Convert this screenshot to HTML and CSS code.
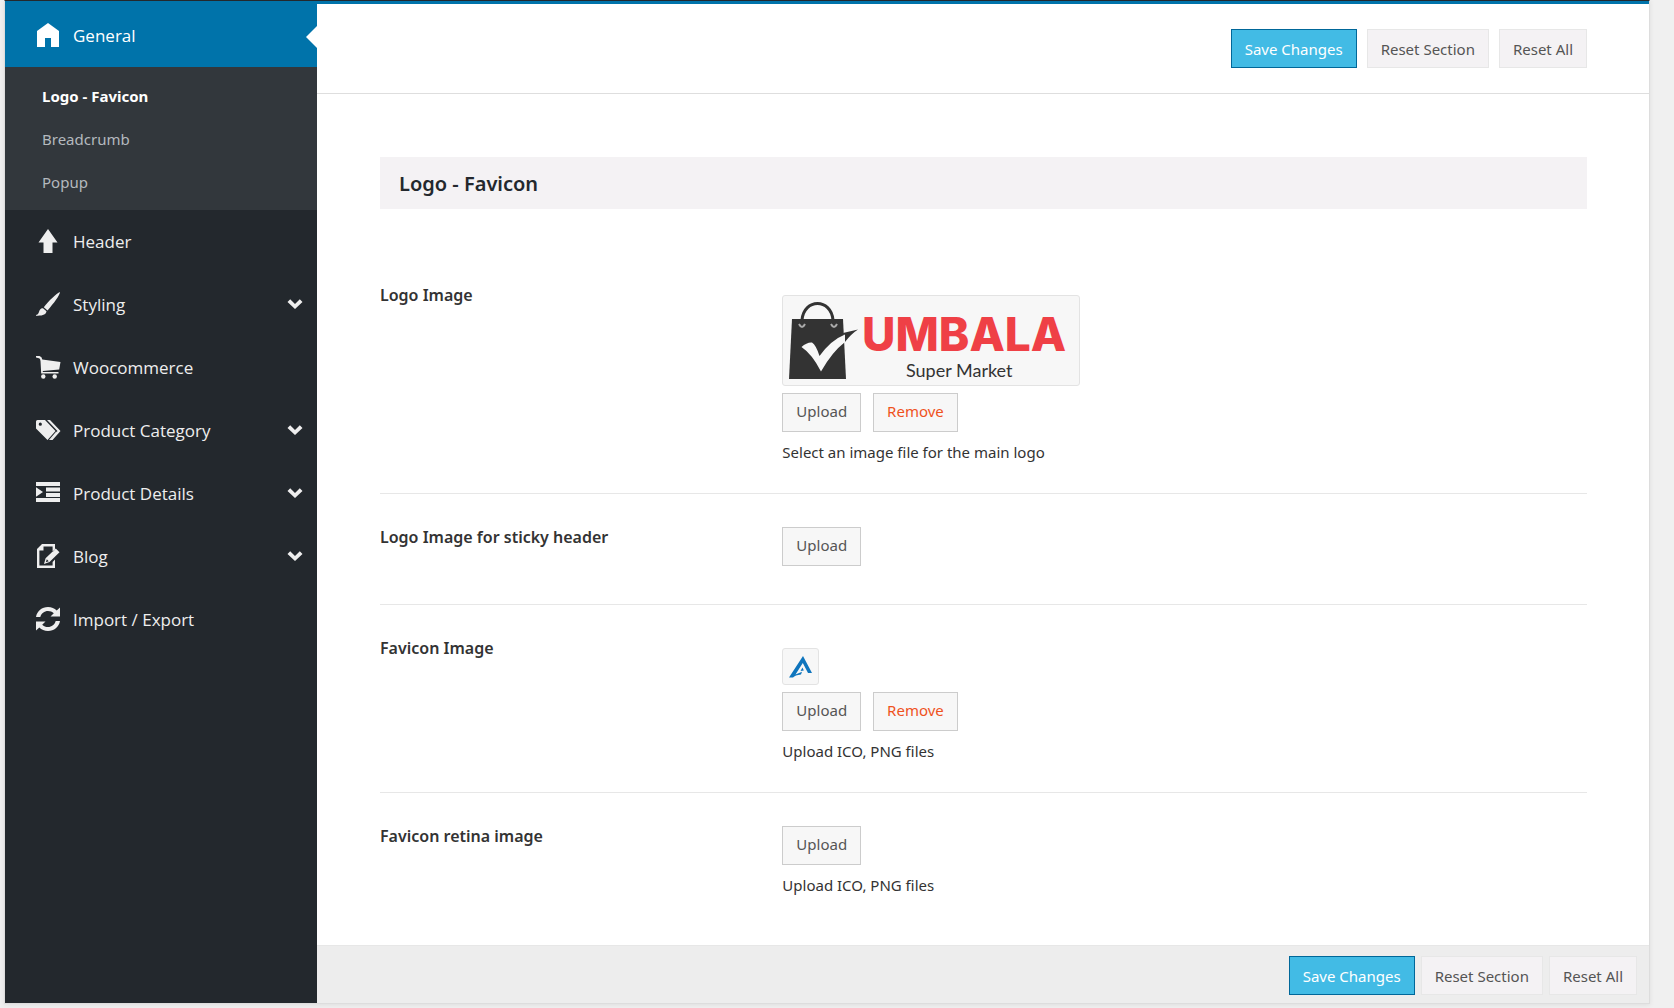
FILE: index.html
```html
<!DOCTYPE html>
<html lang="en">
<head>
<meta charset="utf-8">
<meta name="viewport" content="width=device-width, initial-scale=1">
<title>Theme Options</title>
<link rel="stylesheet" href="styles.css">
</head>
<body>
<form class="panel" action="#">
  <nav class="sidebar" aria-label="Sections">
    <ul class="menu">
      <li>
        <a class="menu-link menu-link-active" href="#general">
          <svg class="icon" viewBox="0 0 24 24"><path d="M12 0 23 8V24H15V15H9V24H1V8Z"/></svg>
          <span class="menu-text">General</span>
        </a>
        <ul class="submenu">
          <li><a class="sub-link sub-link-active" href="#logo">Logo - Favicon</a></li>
          <li><a class="sub-link" href="#breadcrumb">Breadcrumb</a></li>
          <li><a class="sub-link" href="#popup">Popup</a></li>
        </ul>
      </li>
      <li>
        <a class="menu-link" href="#header">
          <svg class="icon" viewBox="0 0 24 24"><path d="M12 0 21.500 13.500H16.500V24H7.500V13.500H2.500Z"/></svg>
          <span class="menu-text">Header</span>
        </a>
      </li>
      <li>
        <a class="menu-link" href="#styling">
          <svg class="icon" viewBox="0 0 24 24"><path d="M24 0C24 3 18 11 11.500 18.500L7.800 15.200C13 8.500 20.500 1.500 24 0ZM7 16.200 10.500 19.300C10 22.500 7 24 0 23.700V22.900C2.500 22.500 2.500 21 3.500 18.500 4.300 16.800 5.500 16.200 7 16.200Z"/></svg>
          <span class="menu-text">Styling</span>
          <svg class="chevron" viewBox="0 0 16 10"><path d="M.5 3 3.200 .3 8 5 12.800 .3 15.500 3 8 10Z"/></svg>
        </a>
      </li>
      <li>
        <a class="menu-link" href="#woocommerce">
          <svg class="icon" viewBox="0 0 24 24"><path d="M0 1H3.500Q6 1.500 6.300 4.500L24.500 7 23.200 14.600 6.800 16V17H22.500V18.500H5.200L4.500 6Q4.300 3.500 3 3.300L0 2.600Z"/><circle cx="7.300" cy="21.500" r="2.200"/><circle cx="18.700" cy="21.500" r="2.200"/></svg>
          <span class="menu-text">Woocommerce</span>
        </a>
      </li>
      <li>
        <a class="menu-link" href="#category">
          <svg class="icon" viewBox="0 0 24 24"><path fill-rule="evenodd" d="M0 3.500Q0 2 1.500 2H9L19.500 13 11.500 22 0 10.500ZM4.300 4.600A1.600 1.600 0 1 0 4.300 7.800 1.600 1.600 0 1 0 4.300 4.600ZM11 2H14L24.500 13 16.500 22H14L21.500 13Z"/><path d="M13 22 20.300 13.500 21 14.500 14.500 22Z"/></svg>
          <span class="menu-text">Product Category</span>
          <svg class="chevron" viewBox="0 0 16 10"><path d="M.5 3 3.200 .3 8 5 12.800 .3 15.500 3 8 10Z"/></svg>
        </a>
      </li>
      <li>
        <a class="menu-link" href="#details">
          <svg class="icon" viewBox="0 0 24 24"><path d="M0 1H24V5H0ZM10 6.500H24V10.500H10ZM10 12H24V16H10ZM0 17H24V21H0ZM0 6.300 7 11 0 15.800Z"/></svg>
          <span class="menu-text">Product Details</span>
          <svg class="chevron" viewBox="0 0 16 10"><path d="M.5 3 3.200 .3 8 5 12.800 .3 15.500 3 8 10Z"/></svg>
        </a>
      </li>
      <li>
        <a class="menu-link" href="#blog">
          <svg class="icon" viewBox="0 0 24 24"><path d="M6 0H19V5.500L16.600 8V2.400H7.500V6.500H3.400V21.600H16.600V18L19 15.500V24H1V5ZM19.800 4.500 23.500 8.200 13.500 18 8 20 9.600 14.300ZM10.800 15.200 9.900 18.200 12.700 17.200Z" fill-rule="evenodd"/></svg>
          <span class="menu-text">Blog</span>
          <svg class="chevron" viewBox="0 0 16 10"><path d="M.5 3 3.200 .3 8 5 12.800 .3 15.500 3 8 10Z"/></svg>
        </a>
      </li>
      <li>
        <a class="menu-link" href="#import">
          <svg class="icon" viewBox="0 0 24 24"><path d="M0 10C1 4 6 0 12 0 15.500 0 18.500 1.300 20.700 3.400L24 .5V9.500H14.500L17.800 6.300C16.200 4.900 14.200 4 12 4 8.300 4 5.300 6.500 4.300 10ZM24 14C23 20 18 24 12 24 8.500 24 5.500 22.700 3.300 20.600L0 23.500V14.500H9.500L6.200 17.700C7.800 19.100 9.800 20 12 20 15.700 20 18.700 17.500 19.700 14Z"/></svg>
          <span class="menu-text">Import / Export</span>
        </a>
      </li>
    </ul>
  </nav>

  <main class="main">
    <div class="toolbar">
      <button class="btn btn-primary" type="submit">Save Changes</button>
      <button class="btn" type="button">Reset Section</button>
      <button class="btn" type="button">Reset All</button>
    </div>

    <div class="content">
      <h2 class="section-title">Logo - Favicon</h2>

      <section class="field">
        <h3 class="field-label">Logo Image</h3>
        <div>
          <div class="preview">
            <svg class="logo" viewBox="0 0 284 77" role="img" aria-label="Umbala Super Market">
              <path class="logo-handle" d="M13 18C15-4 42-4 44 18"/>
              <path class="logo-bag" d="M3 17H54L57 77H0Z"/>
              <path class="logo-bag" d="M54 31 69 27.500Q62 32 56 40Z"/>
              <path class="logo-ring" d="M10 22Q13 28 16 22M42 22Q45 28 48 22"/>
              <path class="logo-check" d="M12.500 45Q18 40 23 40.500 27 43 30.500 54 42 38 56 32.500V40Q43 50 32 69.500 23 52 12.500 45Z"/>
              <text class="logo-name" x="73" y="49">UMBALA</text>
              <text class="logo-tagline" x="117" y="75">Super Market</text>
            </svg>
          </div>
          <div class="actions">
            <button class="btn btn-upload" type="button">Upload</button>
            <button class="btn btn-upload btn-remove" type="button">Remove</button>
          </div>
          <p class="hint">Select an image file for the main logo</p>
        </div>
      </section>

      <section class="field">
        <h3 class="field-label">Logo Image for sticky header</h3>
        <div>
          <div class="actions">
            <button class="btn btn-upload" type="button">Upload</button>
          </div>
        </div>
      </section>

      <section class="field">
        <h3 class="field-label">Favicon Image</h3>
        <div>
          <div class="preview">
            <svg class="favicon" viewBox="0 0 23 23" role="img" aria-label="Favicon">
              <path d="M14 1 23 18H19L13.800 8 6.500 19.500 13 16.800 12 19.500Q6 20 4 22.500H0Z"/>
              <path d="M13.500 12.500 14.800 15.500 11.500 16Z"/>
            </svg>
          </div>
          <div class="actions">
            <button class="btn btn-upload" type="button">Upload</button>
            <button class="btn btn-upload btn-remove" type="button">Remove</button>
          </div>
          <p class="hint">Upload ICO, PNG files</p>
        </div>
      </section>

      <section class="field">
        <h3 class="field-label">Favicon retina image</h3>
        <div>
          <div class="actions">
            <button class="btn btn-upload" type="button">Upload</button>
          </div>
          <p class="hint">Upload ICO, PNG files</p>
        </div>
      </section>
    </div>

    <div class="footer">
      <button class="btn btn-primary" type="submit">Save Changes</button>
      <button class="btn" type="button">Reset Section</button>
      <button class="btn" type="button">Reset All</button>
    </div>
  </main>
</form>
</body>
</html>
```
FILE: styles.css
```css
* {
  box-sizing: border-box;
}

body {
  margin: 0;
  padding: 0 24px 4px 4px;
  background: #f0f0f0;
  color: #333;
  font-family: "Noto Sans", "Open Sans", sans-serif;
  font-size: 15px;
  line-height: 20px;
}

ul {
  margin: 0;
  padding: 0;
  list-style: none;
}

.panel {
  display: grid;
  grid-template-columns: 312px 1fr;
  border: 1px solid #ddd;
  border-top-color: #23282d;
  background: #fff;
  box-shadow: 0 1px 5px rgba(0, 0, 0, 0.08);
}

.sidebar {
  border-top: 3px solid #0073aa;
  background: #23282d;
}

.menu-link {
  position: relative;
  display: flex;
  align-items: center;
  gap: 13px;
  height: 63px;
  padding: 0 14px 1px 31px;
  color: #eee;
  font-family: "Open Sans", "Noto Sans", sans-serif;
  font-size: 17px;
  text-decoration: none;
}

.menu-text {
  padding-top: 2px;
}

.menu-link-active {
  background: #0073aa;
  color: #fff;
}

/* Notch that points from the open section into the content */
.menu-link-active::after {
  content: "";
  position: absolute;
  top: 22px;
  right: 0;
  width: 11px;
  height: 22px;
  background: #fff;
  clip-path: polygon(100% 0, 0 50%, 100% 100%);
}

.icon {
  width: 24px;
  height: 24px;
  overflow: visible;
  fill: currentColor;
}

.chevron {
  width: 16px;
  height: 10px;
  margin-left: auto;
  fill: currentColor;
}

.submenu {
  padding: 8px 0 6px;
  background: #32373c;
}

.sub-link {
  display: block;
  padding-left: 37px;
  color: #b4b9be;
  line-height: 43px;
  text-decoration: none;
}

.sub-link-active {
  color: #fff;
  font-weight: 700;
}

.main {
  display: flex;
  flex-direction: column;
  min-width: 0;
}

.toolbar,
.footer {
  display: flex;
  justify-content: flex-end;
}

.toolbar {
  gap: 10px;
  padding: 25px 62px;
  border-top: 3px solid #0073aa;
  border-bottom: 1px solid #dedede;
}

.footer {
  gap: 6px;
  padding: 10px 12px 8px;
  border-top: 1px solid #e7e7e7;
  background: #ededed;
}

.btn {
  height: 39px;
  padding: 0 13px;
  border: 1px solid #e7e7e7;
  background: #f4f2f4;
  color: #555;
  font: inherit;
  cursor: pointer;
}

.btn-primary {
  border-color: #006799;
  background: #42bbe5;
  color: #fff;
}

.btn-upload {
  padding-bottom: 3px;
  border-color: #ccc;
  background: #f7f7f7;
}

.btn-remove {
  color: #ef521d;
}

.content {
  flex: 1;
  padding: 63px 62px 19px 63px;
}

.section-title {
  margin: 0 0 43px;
  padding: 1px 19px 0;
  background: #f4f2f4;
  color: #23282d;
  font-size: 20px;
  font-weight: 600;
  line-height: 51px;
}

.field {
  display: grid;
  grid-template-columns: 1fr 2fr;
  min-height: 111px;
  padding: 33px 0 31px;
  border-bottom: 1px solid #e7e7e7;
}

.field:last-child {
  border-bottom: 0;
}

.field-label {
  margin: 0;
  font-size: 16px;
  font-weight: 600;
}

.preview {
  width: fit-content;
  margin: 10px 0 7px;
  padding: 6px;
  border: 1px solid #e3e3e3;
  border-radius: 3px;
  background: #f7f7f7;
}

.preview svg {
  display: block;
}

.logo {
  width: 284px;
  height: 77px;
  overflow: visible;
}

.logo-bag {
  fill: #333;
}

.logo-handle {
  fill: none;
  stroke: #333;
  stroke-width: 3;
}

.logo-ring {
  fill: none;
  stroke: #aaa;
  stroke-width: 2;
}

.logo-check {
  fill: #f7f7f7;
}

.logo-name {
  fill: #ef4046;
  font-family: Inter, sans-serif;
  font-size: 46px;
  font-weight: 800;
}

.logo-tagline {
  fill: #333;
  font-family: Lato, sans-serif;
  font-size: 18px;
}

.favicon {
  width: 23px;
  height: 23px;
  fill: #0f75bd;
}

.actions {
  display: flex;
  gap: 12px;
}

.hint {
  margin: 10px 0 0;
}
```
